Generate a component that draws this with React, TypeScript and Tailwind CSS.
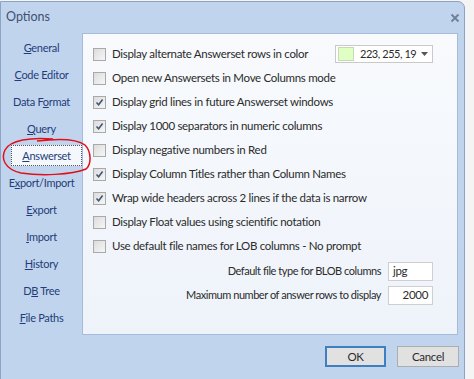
import React from "react";

const font = { fontFamily: 'Lato, "Liberation Sans", Arial, sans-serif' };

function Check({ checked }: { checked?: boolean }) {
  return (
    <div className="w-[13px] h-[13px] border border-[#a9a9a9] bg-gradient-to-br from-[#dcdcdc] to-[#f6f6f6] flex items-center justify-center shrink-0">
      {checked && (
        <svg width="9" height="9" viewBox="0 0 9 9">
          <path d="M1.5 4.5 L3.6 6.8 L7.6 1.5" fill="none" stroke="#3f5270" strokeWidth="1.5" />
        </svg>
      )}
    </div>
  );
}

function Nav({ pre, u, post, active }: { pre: string; u: string; post: string; active?: boolean }) {
  return (
    <div className="h-[27px] flex items-center justify-center">
      <div
        className={
          active
            ? "w-[72px] h-[21px] ml-[10px] flex items-center justify-center bg-[#f4f8fd] border border-dotted border-[#555]"
            : "flex items-center justify-center"
        }
      >
        <span className="text-[11px] tracking-[-0.3px] text-[#1f3d78] leading-none">
          {pre}
          <span className="underline">{u}</span>
          {post}
        </span>
      </div>
    </div>
  );
}

const rows: { text: string; checked?: boolean }[] = [
  { text: "Display alternate Answerset rows in color" },
  { text: "Open new Answersets in Move Columns mode" },
  { text: "Display grid lines in future Answerset windows", checked: true },
  { text: "Display 1000 separators in numeric columns", checked: true },
  { text: "Display negative numbers in Red" },
  { text: "Display Column Titles rather than Column Names", checked: true },
  { text: "Wrap wide headers across 2 lines if the data is narrow", checked: true },
  { text: "Display Float values using scientific notation" },
  { text: "Use default file names for LOB columns - No prompt" },
];

const txt = "text-[11.5px] tracking-[-0.3px] text-[#2b2b2b] whitespace-nowrap";
const lbl = "text-[11px] tracking-[-0.45px] text-[#2b2b2b] whitespace-nowrap";

export default function App() {
  return (
    <div className="w-[474px] h-[379px] bg-[#f4f4f4] overflow-hidden" style={font}>
      <div className="relative w-[465px] h-[381px] mt-[1px] bg-[#c1d4ee] border border-[#8ea3c3] rounded-tr-[7px] flex flex-col">
        {/* title bar */}
        <div className="h-[31px] flex items-center justify-between pl-[5px] pr-[4px] shrink-0">
          <span className="text-[12.5px] text-[#3e5170]">Options</span>
          <svg width="10" height="10" viewBox="0 0 10 10">
            <path d="M1.5 1.5 L8.5 8.5 M8.5 1.5 L1.5 8.5" stroke="#6f7f98" strokeWidth="1.8" />
          </svg>
        </div>
        {/* body */}
        <div className="flex h-[302px] shrink-0">
          <div className="w-[81px] shrink-0 pt-[1px]">
            <Nav pre="" u="G" post="eneral" />
            <Nav pre="" u="C" post="ode Editor" />
            <Nav pre="Data F" u="o" post="rmat" />
            <Nav pre="" u="Q" post="uery" />
            <Nav pre="" u="A" post="nswerset" active />
            <Nav pre="E" u="x" post="port/Import" />
            <Nav pre="" u="E" post="xport" />
            <Nav pre="" u="I" post="mport" />
            <Nav pre="" u="H" post="istory" />
            <Nav pre="D" u="B" post=" Tree" />
            <Nav pre="" u="F" post="ile Paths" />
          </div>
          <div className="w-[376px] h-[302px] bg-gradient-to-b from-[#f8fafd] to-[#eef3fa] border border-[#a6badb] pt-[8px] pl-[10px] pr-[24px]">
            {rows.map((r, i) => (
              <div key={i} className="h-[24px] flex items-center">
                <Check checked={r.checked} />
                <span className={"ml-[6px] " + txt}>{r.text}</span>
                {i === 0 && (
                  <div className="ml-auto w-[98px] h-[18px] bg-white border border-[#c9c9c9] flex items-center pl-[2px] pr-[4px]">
                    <div className="w-[16px] h-[14px] bg-[#dfffc3] border border-[#c8d8b8]" />
                    <span className={"ml-[6px] " + lbl}>223, 255, 19</span>
                    <svg width="7" height="4" viewBox="0 0 7 4" className="ml-auto">
                      <path d="M0 0 L7 0 L3.5 4 Z" fill="#555" />
                    </svg>
                  </div>
                )}
              </div>
            ))}
            <div className="mt-[1px] h-[24px] flex items-center justify-end">
              <span className={lbl}>Default file type for BLOB columns</span>
              <div className={"ml-[7px] w-[45px] h-[19px] bg-white border border-[#cfcfcf] flex items-center px-[4px] " + txt}>jpg</div>
            </div>
            <div className="h-[24px] flex items-center justify-end">
              <span className={lbl}>Maximum number of answer rows to display</span>
              <div className={"ml-[7px] w-[45px] h-[19px] bg-white border border-[#cfcfcf] flex items-center justify-end px-[4px] " + txt}>2000</div>
            </div>
          </div>
        </div>
        {/* buttons */}
        <div className="flex justify-end gap-[11px] pr-[5px] pt-[11px]">
          <button className={"w-[61px] h-[21px] bg-[#e1e1e1] border-2 border-[#3d7fc0] flex items-center justify-center " + txt}>OK</button>
          <button className={"w-[62px] h-[21px] bg-[#e1e1e1] border border-[#adadad] flex items-center justify-center " + txt}>Cancel</button>
        </div>
        {/* red annotation ellipse */}
        <svg className="absolute left-0 top-[133px] pointer-events-none" width="92" height="42" viewBox="0 0 92 42">
          <path
            d="M52 4 C30 2 9 5 4 15 C0 23 3 34 20 38 C40 41 70 40 85 34 C91 29 90 16 84 10 C76 4 60 3 36 6"
            fill="none"
            stroke="#e0101a"
            strokeWidth="1.5"
          />
        </svg>
      </div>
    </div>
  );
}
